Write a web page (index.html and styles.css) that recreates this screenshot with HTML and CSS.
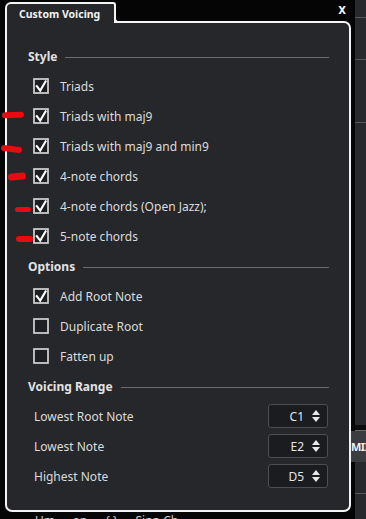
FILE: index.html
```html
<!DOCTYPE html>
<html>
<head>
<meta charset="utf-8">
<link rel="stylesheet" href="styles.css">
</head>
<body>
<div class="screen">
  <div class="dialog">
    <div class="tabbar">
      <div class="tab">Custom Voicing</div>
      <div class="close">X</div>
    </div>
    <div class="panel">
      <div class="section"><span class="stitle">Style</span><span class="rule"></span></div>
      <div class="row"><svg class="cb" viewBox="0 0 16 16"><rect x="1" y="1" width="14" height="14" class="box"/><path d="M3.8 8.2 L7.2 12.6 L12.6 3.4" class="tick"/></svg><span>Triads</span></div>
      <div class="row"><svg class="cb" viewBox="0 0 16 16"><rect x="1" y="1" width="14" height="14" class="box"/><path d="M3.8 8.2 L7.2 12.6 L12.6 3.4" class="tick"/></svg><span>Triads with maj9</span></div>
      <div class="row"><svg class="cb" viewBox="0 0 16 16"><rect x="1" y="1" width="14" height="14" class="box"/><path d="M3.8 8.2 L7.2 12.6 L12.6 3.4" class="tick"/></svg><span>Triads with maj9 and min9</span></div>
      <div class="row"><svg class="cb" viewBox="0 0 16 16"><rect x="1" y="1" width="14" height="14" class="box"/><path d="M3.8 8.2 L7.2 12.6 L12.6 3.4" class="tick"/></svg><span>4-note chords</span></div>
      <div class="row"><svg class="cb" viewBox="0 0 16 16"><rect x="1" y="1" width="14" height="14" class="box"/><path d="M3.8 8.2 L7.2 12.6 L12.6 3.4" class="tick"/></svg><span>4-note chords (Open Jazz);</span></div>
      <div class="row"><svg class="cb" viewBox="0 0 16 16"><rect x="1" y="1" width="14" height="14" class="box"/><path d="M3.8 8.2 L7.2 12.6 L12.6 3.4" class="tick"/></svg><span>5-note chords</span></div>

      <div class="section"><span class="stitle">Options</span><span class="rule"></span></div>
      <div class="row"><svg class="cb" viewBox="0 0 16 16"><rect x="1" y="1" width="14" height="14" class="box"/><path d="M3.8 8.2 L7.2 12.6 L12.6 3.4" class="tick"/></svg><span>Add Root Note</span></div>
      <div class="row"><svg class="cb" viewBox="0 0 16 16"><rect x="1" y="1" width="14" height="14" class="box"/></svg><span>Duplicate Root</span></div>
      <div class="row"><svg class="cb" viewBox="0 0 16 16"><rect x="1" y="1" width="14" height="14" class="box"/></svg><span>Fatten up</span></div>

      <div class="section"><span class="stitle">Voicing Range</span><span class="rule"></span></div>
      <div class="row field"><span>Lowest Root Note</span><span class="spin"><span class="val">C1</span><svg class="arrows" viewBox="0 0 8 14"><path d="M0 6 L4 1 L8 6 Z M0 8 L8 8 L4 13 Z"/></svg></span></div>
      <div class="row field"><span>Lowest Note</span><span class="spin"><span class="val">E2</span><svg class="arrows" viewBox="0 0 8 14"><path d="M0 6 L4 1 L8 6 Z M0 8 L8 8 L4 13 Z"/></svg></span></div>
      <div class="row field"><span>Highest Note</span><span class="spin"><span class="val">D5</span><svg class="arrows" viewBox="0 0 8 14"><path d="M0 6 L4 1 L8 6 Z M0 8 L8 8 L4 13 Z"/></svg></span></div>
    </div>
    <div class="under"><span>Um</span><span>an</span><span>{·}</span><span>Sinn Ch</span></div>
  </div>
  <div class="strip">
    <div class="sl s1"></div>
    <div class="sl s2"></div>
    <div class="sl s3"></div>
    <div class="band-dark"></div>
    <div class="band-light">MII</div>
    <div class="sl s4"></div>
  </div>
  <span class="mark m1"></span>
  <span class="mark m2"></span>
  <span class="mark m3"></span>
  <span class="mark m4"></span>
  <span class="mark m5"></span>
</div>
</body>
</html>
```

FILE: styles.css
```css
html, body {
  margin: 0;
  padding: 0;
  background: #000;
}
.screen {
  position: relative;
  width: 366px;
  height: 519px;
  overflow: hidden;
  display: flex;
  background: #050505;
  font-family: "Noto Sans", "Open Sans", sans-serif;
  color: #dcdcdc;
}
.dialog {
  width: 346px;
  margin-left: 5px;
  padding-top: 2px;
  display: flex;
  flex-direction: column;
  flex: none;
}
.tabbar {
  display: flex;
  align-items: flex-start;
  justify-content: space-between;
  margin-bottom: -2px;
  flex: none;
}
.tab {
  position: relative;
  z-index: 2;
  width: 107px;
  height: 19px;
  box-sizing: content-box;
  border: 2px solid #f4f4f4;
  border-bottom: none;
  border-radius: 6px 3px 0 0;
  background: #25272a;
  color: #f2f2f2;
  font-weight: 700;
  font-size: 10.5px;
  line-height: 20px;
  text-indent: 12px;
  white-space: nowrap;
}
.tab::after {
  content: "";
  position: absolute;
  right: -6px;
  bottom: 0;
  width: 4px;
  height: 4px;
  border-left: 2px solid #f4f4f4;
  border-bottom: 2px solid #f4f4f4;
  border-bottom-left-radius: 4px;
  background: #050505;
}
.close {
  color: #f4f4f4;
  font-weight: 700;
  font-size: 10px;
  line-height: 12px;
  margin-top: 3px;
  margin-right: 5px;
  font-family: "DejaVu Sans", sans-serif;
}
.panel {
  flex: none;
  height: 491px;
  box-sizing: border-box;
  border: 2px solid #f4f4f4;
  border-radius: 0 7px 7px 7px;
  background: #25272a;
  padding: 18px 21px 0 21px;
  display: flex;
  flex-direction: column;
}
.section {
  height: 30px;
  display: flex;
  align-items: center;
  gap: 8px;
}
.stitle {
  font-weight: 700;
  font-size: 12px;
  color: #e2e2e2;
}
.rule {
  flex: 1;
  height: 1px;
  background: #6a6c70;
  margin-top: 2px;
  margin-right: -1px;
}
.row {
  height: 30px;
  display: flex;
  align-items: center;
  gap: 11px;
  padding-left: 5px;
  font-size: 12px;
  color: #dcdcdc;
}
.cb {
  width: 16px;
  height: 16px;
  flex: none;
}
.cb .box {
  fill: #1d1f22;
  stroke: #d4d4d4;
  stroke-width: 1.7;
}
.cb .tick {
  fill: none;
  stroke: #ffffff;
  stroke-width: 2.1;
  stroke-linecap: square;
}
.field {
  justify-content: space-between;
  padding-left: 6px;
}
.spin {
  width: 60px;
  height: 24px;
  box-sizing: border-box;
  border: 1px solid #4c4e52;
  border-radius: 3px;
  background: #1b1c1f;
  display: flex;
  align-items: center;
  justify-content: flex-end;
  padding-right: 7px;
  gap: 8px;
}
.val {
  font-size: 12px;
  color: #e4e4e4;
}
.arrows {
  width: 8px;
  height: 14px;
  fill: #e8e8e8;
}
.under {
  flex: none;
  display: flex;
  gap: 18px;
  padding-left: 30px;
  margin-top: 2px;
  font-size: 12px;
  line-height: 14px;
  color: #d0d0d0;
}
.strip {
  flex: 1;
  margin-left: 4px;
  background: #27292c;
  display: flex;
  flex-direction: column;
}
.sl {
  height: 1px;
  background: #55575b;
  flex: none;
}
.s1 { margin-top: 17px; }
.s2 { margin-top: 41px; }
.s3 { margin-top: 62px; }
.band-dark {
  flex: none;
  margin-top: 302px;
  height: 5px;
  background: #0c0c0d;
  border-bottom: 1px solid #6a6c70;
}
.band-light {
  flex: none;
  height: 31px;
  background: #3a3c40;
  color: #f0f0f0;
  font-weight: 700;
  font-size: 11px;
  line-height: 31px;
  margin-left: -4px;
  letter-spacing: -0.5px;
  white-space: nowrap;
  overflow: hidden;
}
.s4 { margin-top: 31px; }
.mark {
  position: absolute;
  background: #ea0a10;
  border-radius: 4px;
}
.m1 { left: 2px; top: 112px; width: 22px; height: 6px; transform: rotate(-2deg); }
.m2 { left: 1px; top: 146px; width: 21px; height: 6px; transform: rotate(7deg); border-radius: 5px; }
.m3 { left: 8px; top: 173px; width: 18px; height: 7px; transform: rotate(-6deg); }
.m4 { left: 15px; top: 207px; width: 16px; height: 5px; }
.m5 { left: 16px; top: 236px; width: 17px; height: 6px; }
```
